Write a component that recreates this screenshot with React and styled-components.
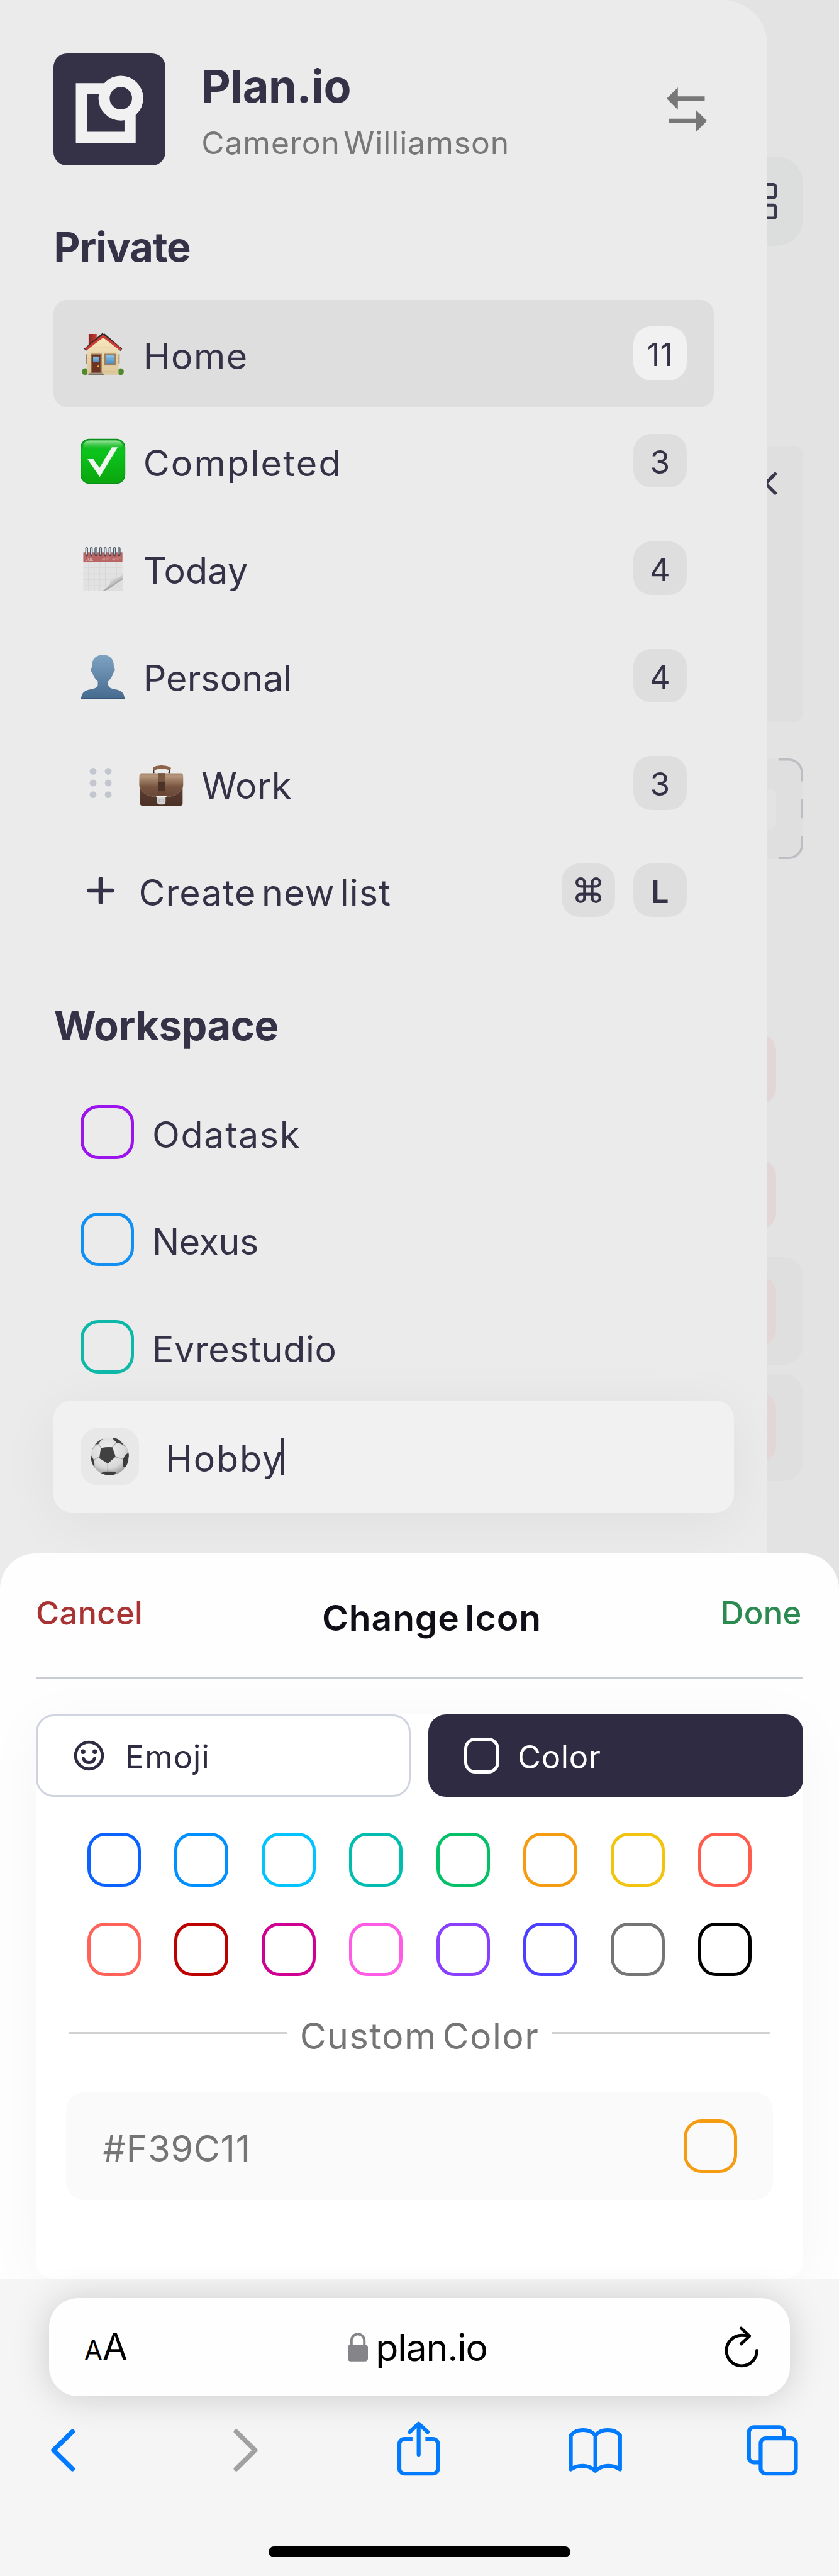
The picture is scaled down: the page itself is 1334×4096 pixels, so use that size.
import React from "react";
import styled, { createGlobalStyle } from "styled-components";

/* The artboard is 37.5rem wide, so 1rem is ten design points. */
const GlobalStyle = createGlobalStyle`
  *, *::before, *::after { box-sizing: border-box; }
  html { font-size: calc(100vw / 37.5); overflow: hidden; }
  body {
    margin: 0;
    background: #f5f5f5;
    color: #353147;
    font-family: Inter, "Liberation Sans", sans-serif;
    -webkit-font-smoothing: antialiased;
  }
  svg { display: block; flex: none; }
`;

const Screen = styled.div`
  display: flex;
  flex-direction: column;
  min-height: 100vh;
  overflow: hidden;
`;

/* ---------- Drawer ---------- */

const Stage = styled.div`
  display: flex;
  height: 71.025rem;
  background: #e3e3e3;
`;

const Drawer = styled.aside`
  width: 34.3rem;
  padding: 2.4rem 2.4rem 0;
  border-radius: 0 2rem 0 0;
  background: #ebebeb;
  overflow: hidden;
`;

const Header = styled.header`
  display: flex;
  align-items: center;
  height: 5rem;
  padding-right: 0.3rem;
`;

const Logo = styled.div`
  width: 5rem;
  height: 5rem;
  border-radius: 0.6rem;
  background: #353147;
`;

const Identity = styled.div`
  flex: 1;
  align-self: flex-start;
  padding: 0.2125rem 0 0 1.6rem;
`;

const AppName = styled.h1`
  margin: 0;
  font-size: 2.02rem;
  font-weight: 700;
  line-height: 2.5rem;
  letter-spacing: -0.0075rem;
`;

const UserName = styled.p`
  margin: 0.275rem 0 0;
  font-size: 1.4rem;
  line-height: 2rem;
  letter-spacing: 0.0265rem;
  word-spacing: -0.27rem;
  color: #777;
`;

const SectionTitle = styled.h2`
  margin: 2.63rem 0 1.37rem;
  font-size: 1.825rem;
  font-weight: 700;
  line-height: 2rem;
  letter-spacing: ${(p) => p.$track}rem;
`;

const Row = styled.div`
  display: flex;
  align-items: center;
  gap: 0.8rem;
  height: 4.8rem;
  padding: 0 1.2rem;
  border-radius: 0.6rem;
  background: ${(p) => (p.$active ? "#dedede" : "transparent")};
`;

const RowLabel = styled.span`
  flex: 1;
  padding-top: 0.24rem;
  font-size: 1.6125rem;
  line-height: 2rem;
  letter-spacing: ${(p) => p.$track || 0}rem;
  word-spacing: -0.25rem;
  white-space: nowrap;
`;

const Badge = styled.span`
  display: flex;
  align-items: center;
  justify-content: center;
  width: 2.4rem;
  height: 2.4rem;
  padding-top: 0.1rem;
  border-radius: 0.8rem;
  background: ${(p) => (p.$light ? "#f1f1f1" : "#dedede")};
  font-size: 1.425rem;
  font-weight: ${(p) => (p.$bold ? 600 : 400)};
  svg { margin-top: -0.1rem; }
`;

const Swatch = styled.span`
  flex: none;
  width: ${(p) => p.$size || 2.4}rem;
  height: ${(p) => p.$size || 2.4}rem;
  border: 0.15rem solid ${(p) => p.$color};
  border-radius: ${(p) => (p.$size ? 0.5 : 0.8)}rem;
`;

const EditRow = styled.div`
  display: flex;
  align-items: center;
  gap: 0.9rem;
  height: 5rem;
  margin-right: -0.9rem;
  padding: 0 1.2rem;
  border-radius: 0.8rem;
  background: #f1f1f1;
  box-shadow: 0 0.4rem 2.6rem rgba(0, 0, 0, 0.055);
`;

const EmojiButton = styled.span`
  display: flex;
  align-items: center;
  justify-content: center;
  width: 2.6rem;
  height: 2.6rem;
  margin-right: 0.3rem;
  border-radius: 0.8rem;
  background: #e8e8e8;
`;

const EditText = styled(RowLabel)`
  flex: none;
`;

const Caret = styled.span`
  width: 0.1rem;
  height: 1.7rem;
  margin-left: -1rem;
  background: #353147;
`;

/* ---------- Page behind the drawer ---------- */

const Peek = styled.div`
  display: flex;
  flex-direction: column;
  width: 1.6rem;
  padding-top: 7rem;
`;

const PeekButton = styled.div`
  display: flex;
  align-items: center;
  height: 4rem;
  border-radius: 0 1.2rem 1.2rem 0;
  background: #dbdedd;
`;

const PeekCard = styled.div`
  height: 12.35rem;
  margin-top: 8.92rem;
  padding-top: 1.2rem;
  border-radius: 0 0.4rem 0.4rem 0;
  background: #dfdfdf;
`;

const PeekDrop = styled.div`
  position: relative;
  display: flex;
  align-items: center;
  height: 4.5rem;
  margin-top: 1.63rem;
  border-radius: 0 0.6rem 0.6rem 0;
  background: #dfdfdf;
  svg { position: absolute; inset: 0; }
`;

const PeekInput = styled.div`
  width: 0.4rem;
  height: 1.8rem;
  border-radius: 0 0.3rem 0.3rem 0;
  background: #e3e3e3;
`;

const PeekTasks = styled.div`
  display: flex;
  flex-direction: column;
  gap: 0.4rem;
  padding-top: 7rem;
`;

const PeekTask = styled.div`
  display: flex;
  align-items: center;
  height: 4.8rem;
  margin-bottom: ${(p) => p.$after || 0}rem;
  border-radius: 0 0.9rem 0.9rem 0;
  background: ${(p) => (p.$filled ? "#dfdfdf" : "transparent")};
`;

const PeekTag = styled.div`
  width: 0.4rem;
  height: 3.2rem;
  overflow: hidden;
  &::before {
    content: "";
    display: block;
    width: 2.4rem;
    height: 100%;
    margin-left: -2rem;
    border-radius: 0.8rem;
    background: #e2d6d6;
  }
`;

/* ---------- Bottom sheet ---------- */

const Sheet = styled.section`
  position: relative;
  height: 32.41rem;
  margin-top: -1.6rem;
  padding: 0 1.6rem;
  border-radius: 1.6rem 1.6rem 0 0;
  background: #fefefe;
  overflow: hidden;
`;

const SheetHeader = styled.header`
  display: flex;
  justify-content: space-between;
  height: 5.6rem;
  padding: 1.68rem 0.07rem 0 0;
  border-bottom: 0.1rem solid #c9ccd3;
`;

const SheetAction = styled.button`
  height: 2rem;
  padding: 0;
  border: 0;
  background: none;
  font: 500 1.425rem/2rem Inter, sans-serif;
  letter-spacing: 0.009rem;
  color: ${(p) => p.$color};
`;

const SheetTitle = styled.h3`
  margin: 0.225rem 0 0;
  font-size: 1.6rem;
  font-weight: 600;
  line-height: 2rem;
  letter-spacing: 0.025rem;
  word-spacing: -0.2rem;
  color: #100f18;
`;

const Picker = styled.div`
  height: 25.21rem;
  margin-top: 1.6rem;
  border-radius: 0.8rem;
  background: #fff;
  box-shadow: 0 0.4rem 2.6rem rgba(0, 0, 0, 0.04);
`;

const Tabs = styled.div`
  display: grid;
  grid-template-columns: 1fr 1fr;
  gap: 0.8rem;
`;

const Tab = styled.button`
  display: flex;
  align-items: center;
  gap: 0.8rem;
  height: 3.7rem;
  padding: 0 1.5rem;
  border: 0.1rem solid ${(p) => (p.$selected ? "#2f2b42" : "#cfd4de")};
  border-radius: 0.8rem;
  background: ${(p) => (p.$selected ? "#2f2b42" : "#fff")};
  color: ${(p) => (p.$selected ? "#fff" : "#2f2b42")};
  font: 400 1.425rem/2rem Inter, sans-serif;
  letter-spacing: ${(p) => (p.$selected ? 0.02 : 0.03)}rem;
`;

const TabText = styled.span`
  padding-top: 0.09rem;
`;

const Palette = styled.div`
  display: grid;
  grid-template-columns: repeat(8, 2.4rem);
  gap: 1.6rem 1.5rem;
  padding: 1.6rem 2.3rem 0;
`;

const Divider = styled.div`
  display: flex;
  align-items: center;
  gap: 0.55rem;
  margin: 1.7rem 1.5rem 0;
  font-size: 1.6125rem;
  line-height: 2rem;
  letter-spacing: 0.043rem;
  word-spacing: -0.25rem;
  color: #757575;
  &::before, &::after {
    content: "";
    flex: 1;
    height: 0.1rem;
    margin-bottom: 0.3rem;
    background: #d2d2d2;
  }
`;

const HexField = styled.div`
  display: flex;
  align-items: center;
  height: 4.8rem;
  margin: 1.5rem 1.35rem 0;
  padding: 0 1.6rem 0 1.65rem;
  border-radius: 0.8rem;
  background: #fafafa;
  color: #757575;
`;

/* ---------- Browser chrome ---------- */

const Browser = styled.footer`
  position: relative;
  flex: 1;
  border-top: 0.05rem solid #bdbdbd;
  padding: 0.85rem 2.2rem 0;
  background: #f5f5f5;
`;

const AddressBar = styled.div`
  display: grid;
  grid-template-columns: 1fr auto 1fr;
  align-items: center;
  height: 4.4rem;
  padding: 0 1.4rem 0 1.57rem;
  border-radius: 1.3rem;
  background: #fefefe;
  box-shadow: 0 0.05rem 1.6rem rgba(0, 0, 0, 0.17);
  color: #000;
`;

const TextSize = styled.span`
  display: flex;
  align-items: baseline;
  padding-top: 0.16rem;
  font-size: 1.62rem;
  line-height: 2rem;
  small { font-size: 1.175rem; }
`;

const Address = styled.span`
  display: flex;
  align-items: center;
  gap: 0.35rem;
  margin-right: 0.35rem;
  font-size: 1.66rem;
  line-height: 2rem;
  letter-spacing: -0.03rem;
`;

const Reload = styled.span`
  display: flex;
  justify-content: flex-end;
`;

const Toolbar = styled.nav`
  display: flex;
  justify-content: space-between;
  width: 33.5rem;
  margin-top: 1.15rem;
`;

const HomeIndicator = styled.div`
  width: 13.5rem;
  height: 0.5rem;
  margin: 3.05rem auto 0;
  border-radius: 0.25rem;
  background: #000;
`;

/* ---------- Drawings ---------- */

/* One viewBox unit is a quarter of a design point. */
const Art = ({ w, h, box, children, ...rest }) => (
  <svg
    viewBox={box || `0 0 ${w} ${h}`}
    style={{ width: `${w / 40}rem`, height: `${h / 40}rem` }}
    fill="none"
    overflow="visible"
    {...rest}
  >
    {children}
  </svg>
);

const LogoMark = () => (
  <Art w={200} h={200}>
    <path d="M50 63H137V150H50Z" stroke="#f1f1f1" strokeWidth="20" />
    <circle cx="120.500" cy="80" r="30" fill="#353147" stroke="#f1f1f1" strokeWidth="20" />
  </Art>
);

const SwitchIcon = () => (
  <Art w={72} h={80} fill="#777">
    <path d="M0 20L20 0V16H68V24H20V40ZM72 60L52 40V56H4V64H52V80Z" />
  </Art>
);

const House = () => (
  <Art w={80} h={80} box="4 2 80 80">
    <defs>
      <linearGradient id="glass" x1="0" y1="0" x2="0" y2="1">
        <stop offset="0" stopColor="#8cc3e8" /><stop offset="1" stopColor="#4b8fc6" />
      </linearGradient>
      <linearGradient id="wall" x1="0" y1="0" x2="0" y2="1">
        <stop offset="0" stopColor="#f8e6bd" /><stop offset="1" stopColor="#dcc79c" />
      </linearGradient>
      <linearGradient id="brick" x1="0" y1="0" x2="1" y2="0">
        <stop offset="0" stopColor="#8b2320" /><stop offset="1" stopColor="#c63d33" />
      </linearGradient>
    </defs>
    <path d="M18.500 7.500H33V20L18.500 30Z" fill="url(#brick)" />
    <ellipse cx="12" cy="75" rx="5.500" ry="6" fill="#4f8a2c" />
    <ellipse cx="76" cy="75" rx="5.500" ry="6" fill="#4f8a2c" />
    <path d="M14 44H17V61H14ZM71 44H74V61H71Z" fill="#a08566" />
    <path d="M16 37L44 13L72 37V80.500H16Z" fill="url(#wall)" />
    <path d="M17 40H71M17 46H71M17 52H71M17 58H71M17 64H71M17 70H71M17 75H71M26 31H63" stroke="#cdb88c" strokeWidth=".6" />
    <path d="M44.500 8L12 36" stroke="#2b2a2c" strokeWidth="5" />
    <path d="M44.500 8L77 36" stroke="#2b2a2c" strokeWidth="5" />
    <path d="M13 35.500L44.500 11.500L76 35.500" stroke="#cf3b32" strokeWidth="4.200" />
    <path d="M22 43H42V78H22Z" fill="#9b7453" />
    <path d="M24 45.500H39.500V77H24Z" fill="#6d3423" />
    <path d="M26.500 48H37.500V58H26.500Z" fill="url(#glass)" />
    <circle cx="36" cy="65.500" r="1.700" fill="#f1b53d" />
    <path d="M46.500 43H68V63.500H46.500Z" fill="#9b7f60" />
    <path d="M49 45.500H64.500V60H49Z" fill="url(#glass)" />
    <path d="M20 77H44V79.500H20Z" fill="#a19484" />
    <path d="M18 79H46V81.800H18Z" fill="#7d7468" />
  </Art>
);

const CheckMark = () => (
  <Art w={80} h={80}>
    <defs>
      <linearGradient id="green" x1="0" y1="0" x2="0" y2="1">
        <stop offset="0" stopColor="#12a825" /><stop offset=".28" stopColor="#0cc31c" />
        <stop offset="1" stopColor="#0aa60d" />
      </linearGradient>
      <linearGradient id="gloss" x1="0" y1="0" x2="0" y2="1">
        <stop offset="0" stopColor="#a6e8a6" /><stop offset="1" stopColor="#0cc31c" stopOpacity="0" />
      </linearGradient>
    </defs>
    <rect x=".800" y="1.500" width="78.500" height="79" rx="15" fill="url(#green)" stroke="#0b8f1c" strokeWidth="1.500" />
    <rect x="5" y="4" width="70" height="18" rx="11" fill="url(#gloss)" />
    <path d="M12.500 37H23L34 52.500L56 16H66.500L34.500 69Z" fill="#f1f5f1" />
  </Art>
);

const Calendar = () => (
  <Art w={80} h={80} box="4 6 80 80">
    <defs>
      <linearGradient id="curl" x1=".35" y1=".25" x2=".8" y2=".85">
        <stop offset="0" stopColor="#f4f4f4" /><stop offset=".55" stopColor="#bdbdbd" />
        <stop offset=".85" stopColor="#585858" /><stop offset="1" stopColor="#a8a8a8" />
      </linearGradient>
    </defs>
    <path d="M9 34H79V87H9Z" fill="#e2e2e2" />
    <path d="M9 44.500H79M9 55.500H79M9 66.500H79M9 77H79M18.500 34V87M28.500 34V87M38.500 34V87M48.500 34V87M58.500 34V87M68.500 34V87" stroke="#d2d2d2" strokeWidth=".8" />
    <path d="M79 54C77 62 72 64 60 63C58 74 51 84 40 87H79Z" fill="#dedede" />
    <path d="M79 54C77 62 72 64 60 63C58 74 51 84 40 87C55 87 63 74 79 67Z" fill="url(#curl)" />
    <path d="M9 17.500H79V34H9Z" fill="#b96565" />
    <text x="13" y="32.500" fontSize="7.200" fill="#ecd4d4" fontFamily="Inter, sans-serif">JUL</text>
    <path d="M43 31.500L57 27M61 31.500L76 27" stroke="#cf9696" strokeWidth="4" strokeDasharray="1 1" />
    {[15, 23.300, 31.600, 39.900, 48.200, 56.500, 64.800, 73.100].map((x) => (
      <g key={x}>
        <circle cx={x} cy="22" r="2.300" fill="#5d3c3d" />
        <rect x={x - 1.700} y="9" width="3.400" height="13" rx="1.700" stroke="#4b5868" strokeWidth="1.500" fill="#d8dde2" />
      </g>
    ))}
  </Art>
);

const Person = () => (
  <Art w={80} h={80}>
    <defs>
      <linearGradient id="bust" x1="0" y1="0" x2="0" y2="1">
        <stop offset="0" stopColor="#7ea3c2" /><stop offset="1" stopColor="#456a8e" />
      </linearGradient>
    </defs>
    <path
      d="M40 2.500C52 2.500 59.500 10 59.500 21V25C62.500 25.500 62 33 58.500 35C57 42 53 46 49.500 50V56C50.500 62 55 62.500 62 64C73 66 78 70 79 81H1C2 70 7 66 18 64C25 62.500 30 62 31 56V50C27 46 23 42 21.500 35C18 33 17.500 25.500 20.500 25V21C20.500 10 28 2.500 40 2.500Z"
      fill="url(#bust)"
    />
    <path d="M1 80.500H79" stroke="#36587a" strokeWidth="1.400" />
  </Art>
);

const Briefcase = () => (
  <Art w={80} h={80} box="108 0 80 80">
    <defs>
      <linearGradient id="leather" x1="0" y1="0" x2="0" y2="1">
        <stop offset="0" stopColor="#a58369" /><stop offset=".12" stopColor="#b5957b" />
        <stop offset=".55" stopColor="#77543f" /><stop offset="1" stopColor="#67463a" />
      </linearGradient>
      <linearGradient id="hide" x1="0" y1="0" x2="0" y2="1">
        <stop offset="0" stopColor="#6b4a3c" /><stop offset="1" stopColor="#4b3026" />
      </linearGradient>
    </defs>
    <path d="M134.500 23C133 14 136 12 142 11.500C150 10.500 154 11 158 12C162.500 13 164 15 161.500 23" stroke="#3b2a22" strokeWidth="2.500" />
    <path d="M136 14.500C143 11 154 11 162 14.500" stroke="#8d634a" strokeWidth="6" strokeLinecap="round" />
    <rect x="110" y="24" width="76" height="57" rx="4" fill="url(#hide)" />
    <path d="M112 23H184Q187 23 187 30V45C184 60 168 67 148 67C128 67 112 60 108.500 45V30Q108.500 23 112 23Z" fill="url(#leather)" />
    <path d="M109 45C112 60 128 66 148 66C168 66 183 60 186.500 45" stroke="#8b6753" strokeWidth="1" />
    <path d="M142 23H154.500V58H142Z" fill="#4b3226" />
    <path d="M142 23H154.500V38H142Z" fill="#795642" />
    <path d="M140 64V60C141 52 156 52 156.500 60V64Z" fill="#6b4635" />
    <path d="M139 63.500H157V66H155.500V75Q155 79 151 79H145Q141 79 140.500 75V66H139Z" fill="#d4d4d4" />
    <path d="M139 63.500H157V66H139Z" fill="#f5f5f5" />
    <rect x="144" y="69.500" width="8" height="5" rx="1" stroke="#9e9e9e" strokeWidth=".8" />
  </Art>
);

const SoccerBall = () => (
  <Art w={69} h={69} box="25.5 29.500 69 69">
    <defs>
      <radialGradient id="ball" cx=".45" cy=".35" r=".65">
        <stop offset="0" stopColor="#f0f0f0" /><stop offset=".7" stopColor="#d9d9d9" />
        <stop offset="1" stopColor="#9d9d9d" />
      </radialGradient>
      <clipPath id="round"><circle cx="60" cy="64" r="34" /></clipPath>
    </defs>
    <circle cx="60" cy="64" r="34" fill="url(#ball)" />
    <g clipPath="url(#round)">
      <path
        d="M44.500 49L39.500 42M64 48.500L72 39M69.500 65L84 69M56 76V90M42 64L31 70.500M39.500 42Q32 45 27 54M72 39Q84 41 88 47M31 70.500Q28 68 26 62M84 69Q90 65 91 58M56 90Q48 91 43 94M56 90Q64 90 72 93M84 69L84 84M31 70.500L33 84"
        stroke="#a9a9a9" strokeWidth="1.300"
      />
      <path d="M44.500 49.500Q54 48 64 48.500L69.500 64.500L56.500 76L42 67Z" fill="#414141" stroke="#414141" strokeWidth="1.500" strokeLinejoin="round" />
      <path d="M31 44L45 31L47 33Q42 38 39.500 42Q35 42 31 45Z" fill="#494949" />
      <path d="M64 31L73 30L86 45Q79 40 72 39.500Z" fill="#414141" />
      <path d="M95 58L91 59Q84 65 84 69L83.500 82L90 84Z" fill="#3c3c3c" />
      <path d="M25 60L27.500 64Q31 68 31 71L32.500 85L24 78Z" fill="#3c3c3c" />
      <path d="M44 94Q50 91 56 91Q64 91 72 93L64 99H50Z" fill="#3c3c3c" />
    </g>
  </Art>
);

const DragHandle = () => (
  <Art w={72} h={72} fill="#c3c6ce">
    {[15, 36, 57].map((y) => (
      <g key={y}>
        <circle cx="22.500" cy={y} r="6.100" />
        <circle cx="49.500" cy={y} r="6.100" />
      </g>
    ))}
  </Art>
);

const PlusIcon = () => (
  <Art w={72} h={72} stroke="#353147" strokeWidth="7.500" strokeLinecap="round">
    <path d="M36 15V57M15 36H57" />
  </Art>
);

const CommandIcon = () => (
  <Art w={55} h={55} box="0 0 24 24" stroke="#353147" strokeWidth="2.100">
    <path d="M15 6v12a3 3 0 1 0 3-3H6a3 3 0 1 0 3 3V6a3 3 0 1 0-3 3h12a3 3 0 1 0-3-3" />
  </Art>
);

const SmileIcon = () => (
  <Art w={64} h={64}>
    <circle cx="32" cy="32" r="24" stroke="#2f2b42" strokeWidth="5.500" />
    <circle cx="21.500" cy="25" r="4.200" fill="#2f2b42" />
    <circle cx="42.500" cy="25" r="4.200" fill="#2f2b42" />
    <path d="M22 37Q24 44.500 32 44.500T42 37" stroke="#2f2b42" strokeWidth="5.500" strokeLinecap="round" />
  </Art>
);

const GridIcon = () => (
  <Art w={20} h={66} overflow="hidden" stroke="#3b374d" strokeWidth="5.600">
    <rect x="-9" y="2.800" width="23.300" height="23.300" rx="3" />
    <rect x="-9" y="39.600" width="23.300" height="23.300" rx="3" />
  </Art>
);

const CloseIcon = () => (
  <Art w={20} h={40} overflow="hidden" stroke="#3b374d" strokeWidth="6" strokeLinecap="round">
    <path d="M-20 3L14 37M14 3L-20 37" />
  </Art>
);

const DashedEdge = () => (
  <Art w={64} h={180} stroke="#bdbdc4" strokeWidth="4">
    <path d="M20 2H38A24 24 0 0 1 62 26V41M62 73V107M62 139V154A24 24 0 0 1 38 178H20" />
  </Art>
);

const LockIcon = () => (
  <Art w={36} h={52}>
    <rect x="0" y="21.500" width="36" height="30" rx="5" fill="#858589" />
    <path d="M6.500 23V14.500A11.500 12 0 0 1 29.500 14.500V23" stroke="#858589" strokeWidth="4.500" />
  </Art>
);

const ReloadIcon = () => (
  <Art w={64} h={76} stroke="#000" strokeWidth="5.500" strokeLinecap="round" strokeLinejoin="round">
    <path d="M61.300 44.500A27.300 27.300 0 1 1 34 17.200Q41 17.200 48 18.500M33 4.500L48 18.500L33 32.500" />
  </Art>
);

const BarIcon = ({ d, color = "#007aff", width = 7 }) => (
  <Art w={96} h={100} stroke={color} strokeWidth={width} strokeLinecap="round" strokeLinejoin="round">
    <path d={d} />
  </Art>
);

const barIcons = {
  back: "M42 17.500L8 50.500L42 84",
  forward: "M23 17.500L57 50.500L23 84",
  share: "M39 58.500V4M23 18L39 3L55 18",
  book: "M-.5 85V24C10 11.500 33 11.500 43.500 24C54 11.500 77 11.500 87.500 24V85C75 76 56 76 43.500 87.500C31 76 12 76 -.5 85ZM43.500 24V87",
  tabs: "M27.500 72.500H15.500a9 9 0 0 1-9-9V18.500a9 9 0 0 1 9-9H60.500a9 9 0 0 1 9 9V29.500M36.500 29.500H81.500a9 9 0 0 1 9 9V83.500a9 9 0 0 1-9 9H36.500a9 9 0 0 1-9-9V38.500a9 9 0 0 1 9-9Z",
};

const ShareIcon = () => (
  <Art w={96} h={100} stroke="#007aff" strokeWidth="7">
    <path d={barIcons.share} strokeLinecap="round" strokeLinejoin="round" />
    <path d="M28 30.500H13.500a9 9 0 0 0-9 9V83.500a9 9 0 0 0 9 9H64.500a9 9 0 0 0 9-9V39.500a9 9 0 0 0-9-9H51" />
  </Art>
);

/* ---------- Data ---------- */

const privateLists = [
  { label: "Home", count: 11, Icon: House, track: 0.045, active: true },
  { label: "Completed", count: 3, Icon: CheckMark, track: 0.064 },
  { label: "Today", count: 4, Icon: Calendar, track: 0.006 },
  { label: "Personal", count: 4, Icon: Person, track: 0.003 },
  { label: "Work", count: 3, Icon: Briefcase, track: 0.01, draggable: true },
];

const workspaces = [
  { label: "Odatask", color: "#9b13ed", track: 0.048 },
  { label: "Nexus", color: "#128ff2", track: -0.01 },
  { label: "Evrestudio", color: "#0eb8a9", track: 0.018 },
];

const palette = [
  "#0a62ff", "#0090ff", "#00c3ff", "#00bdb0", "#06c068", "#f59c11", "#f1c40f", "#ff5c4d",
  "#ff6259", "#bd0000", "#cf0092", "#ff5ce6", "#8a3fff", "#4a40ff", "#757575", "#000000",
];

export default function App() {
  return (
    <Screen>
      <GlobalStyle />
      <Stage>
        <Drawer>
          <Header>
            <Logo><LogoMark /></Logo>
            <Identity>
              <AppName>Plan.io</AppName>
              <UserName>Cameron Williamson</UserName>
            </Identity>
            <SwitchIcon />
          </Header>

          <SectionTitle $track={-0.028}>Private</SectionTitle>
          {privateLists.map(({ label, count, Icon, track, active, draggable }) => (
            <Row key={label} $active={active}>
              {draggable && <DragHandle />}
              <Icon />
              <RowLabel $track={track}>{label}</RowLabel>
              <Badge $light={active}>{count}</Badge>
            </Row>
          ))}
          <Row>
            <PlusIcon />
            <RowLabel $track={0.031}>Create new list</RowLabel>
            <Badge><CommandIcon /></Badge>
            <Badge $bold>L</Badge>
          </Row>

          <SectionTitle $track={-0.0125}>Workspace</SectionTitle>
          {workspaces.map(({ label, color, track }) => (
            <Row key={label}>
              <Swatch $color={color} />
              <RowLabel $track={track}>{label}</RowLabel>
            </Row>
          ))}
          <EditRow>
            <EmojiButton><SoccerBall /></EmojiButton>
            <EditText $track={0.052}>Hobby</EditText>
            <Caret />
          </EditRow>
        </Drawer>

        <Peek>
          <PeekButton><GridIcon /></PeekButton>
          <PeekCard><CloseIcon /></PeekCard>
          <PeekDrop>
            <PeekInput />
            <DashedEdge />
          </PeekDrop>
          <PeekTasks>
            <PeekTask $after={0.4}><PeekTag /></PeekTask>
            <PeekTask><PeekTag /></PeekTask>
            <PeekTask $filled><PeekTag /></PeekTask>
            <PeekTask $filled><PeekTag /></PeekTask>
          </PeekTasks>
        </Peek>
      </Stage>

      <Sheet>
        <SheetHeader>
          <SheetAction $color="#a93333">Cancel</SheetAction>
          <SheetTitle>Change Icon</SheetTitle>
          <SheetAction $color="#2a8a4f">Done</SheetAction>
        </SheetHeader>
        <Picker>
          <Tabs>
            <Tab><SmileIcon /><TabText>Emoji</TabText></Tab>
            <Tab $selected><Swatch $size={1.6} $color="#fff" /><TabText>Color</TabText></Tab>
          </Tabs>
          <Palette>
            {palette.map((color) => <Swatch key={color} $color={color} />)}
          </Palette>
          <Divider>Custom Color</Divider>
          <HexField>
            <RowLabel $track={0.022}>#F39C11</RowLabel>
            <Swatch $color="#f59c11" />
          </HexField>
        </Picker>
      </Sheet>

      <Browser>
        <AddressBar>
          <TextSize><small>A</small>A</TextSize>
          <Address><LockIcon />plan.io</Address>
          <Reload><ReloadIcon /></Reload>
        </AddressBar>
        <Toolbar>
          <BarIcon d={barIcons.back} width={8.5} />
          <BarIcon d={barIcons.forward} width={8.5} color="#a1a1a1" />
          <ShareIcon />
          <BarIcon d={barIcons.book} />
          <BarIcon d={barIcons.tabs} />
        </Toolbar>
        <HomeIndicator />
      </Browser>
    </Screen>
  );
}
